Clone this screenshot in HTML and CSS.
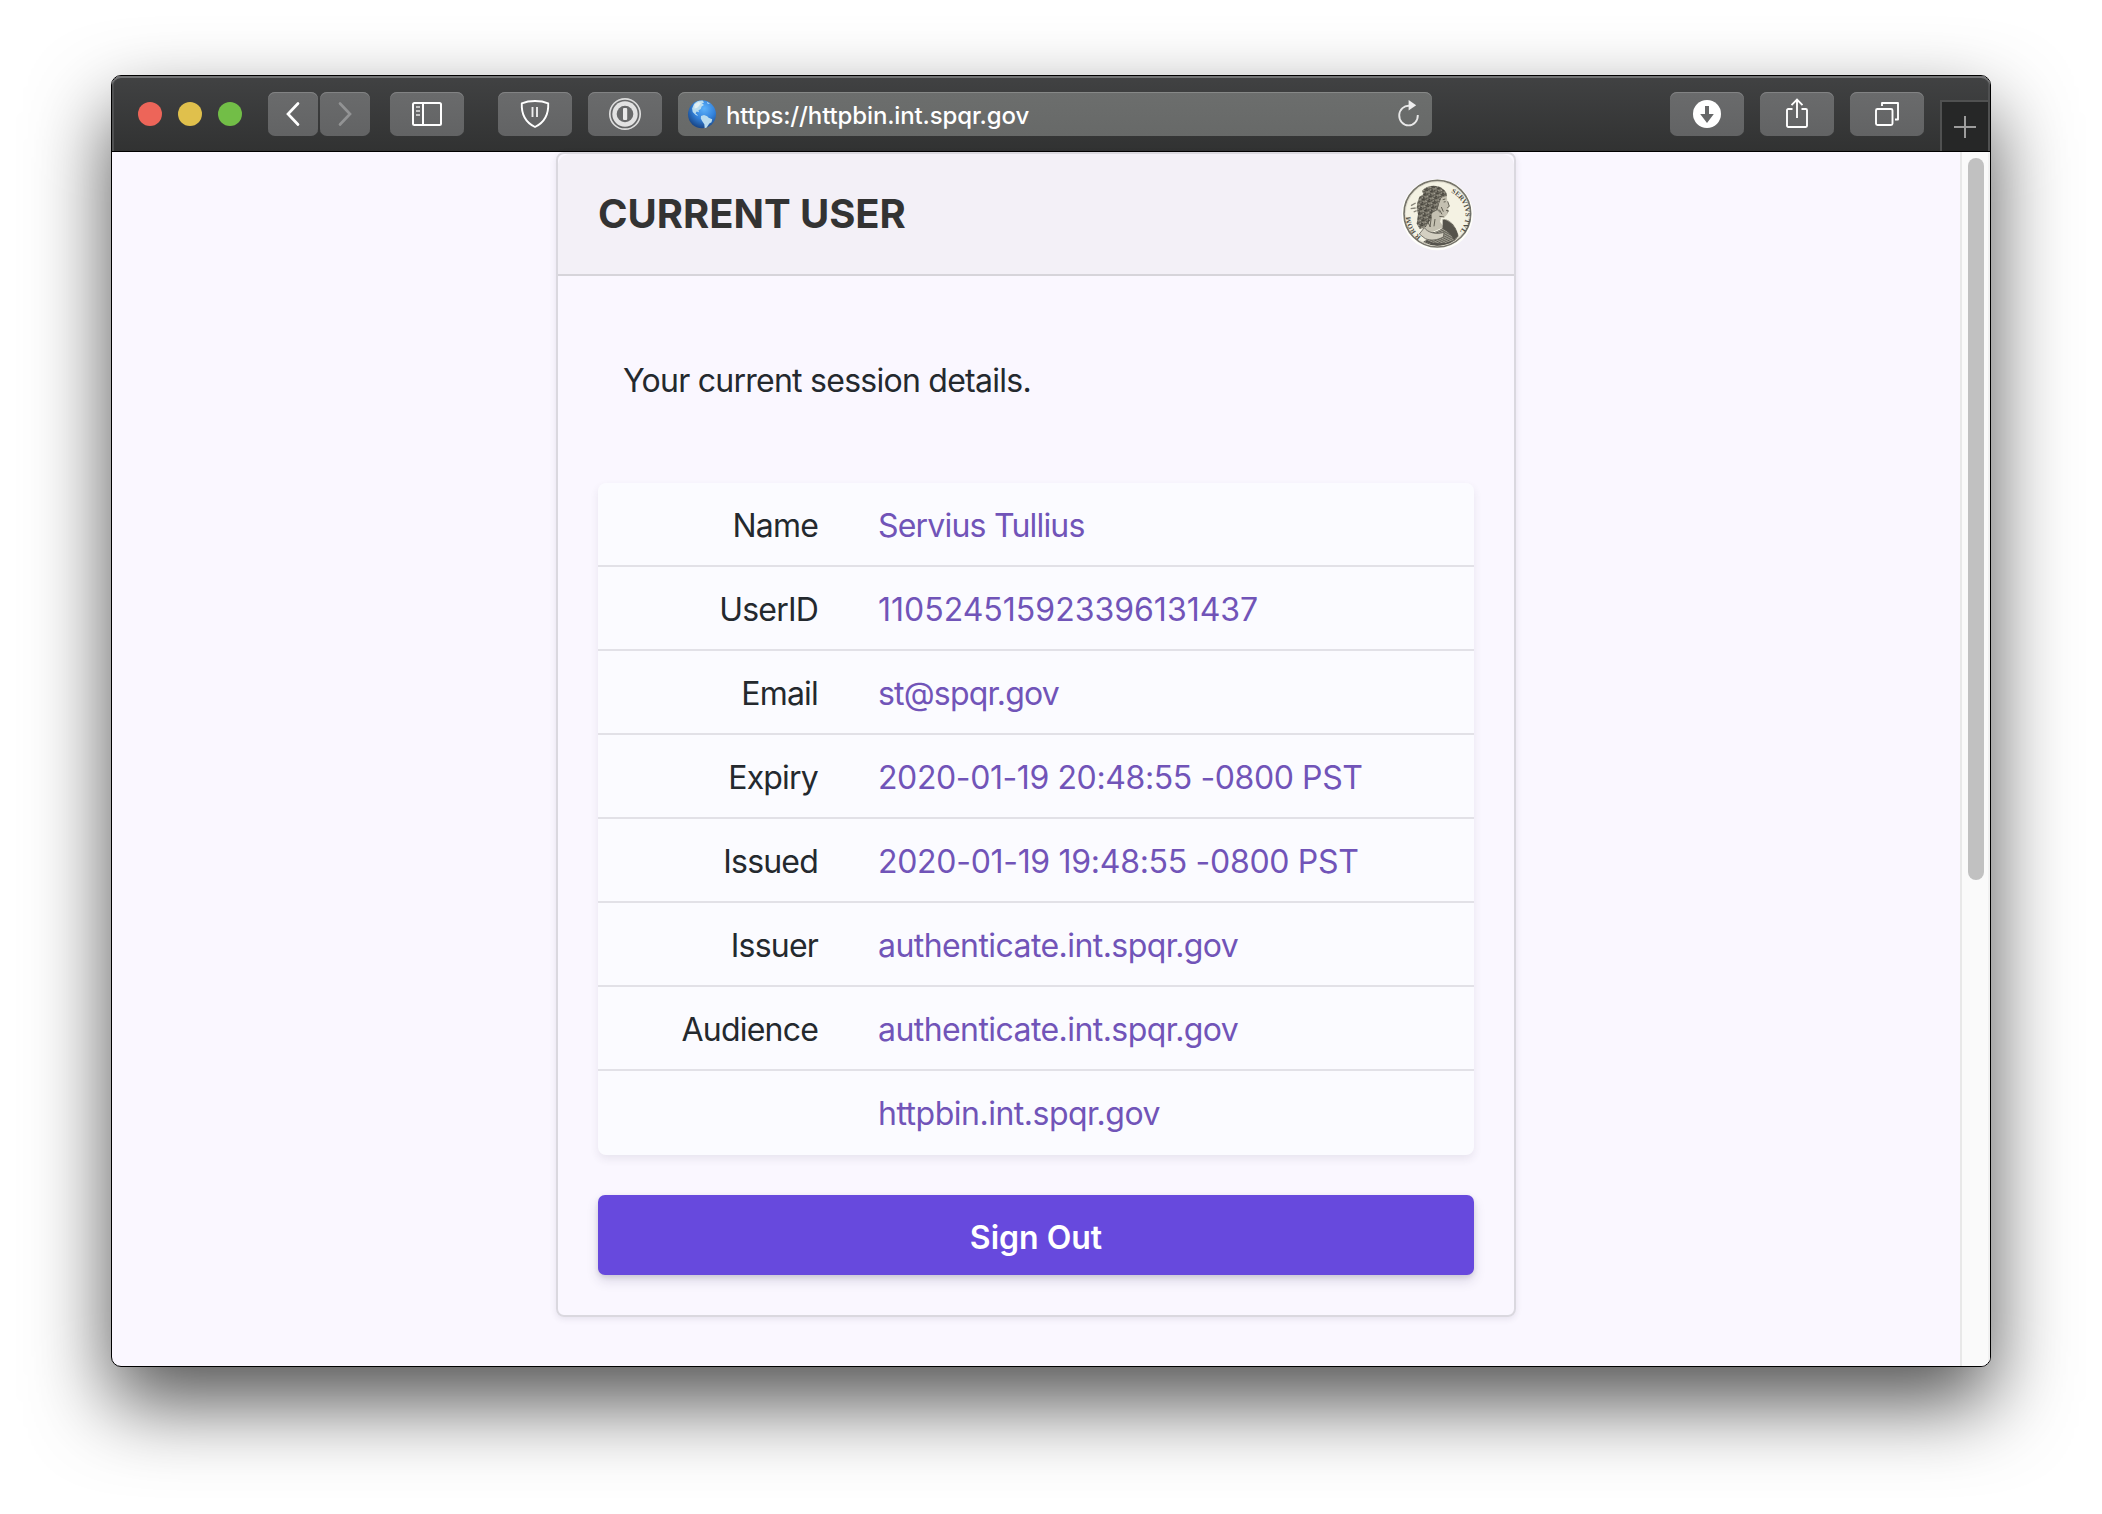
FILE: index.html
```html
<!DOCTYPE html>
<html lang="en">
<head>
<meta charset="utf-8">
<title>Current User</title>
<link rel="stylesheet" href="styles.css">
</head>
<body>
<div class="window">
  <header class="toolbar">
    <div class="lights"><i class="light red"></i><i class="light yellow"></i><i class="light green"></i></div>
    <div class="nav">
      <button class="tool narrow"><svg width="50" height="44" viewBox="0 0 50 44"><path d="M30 11.500L20 22l10 10.500" fill="none" stroke="#fff" stroke-width="2.700" stroke-linecap="round"/></svg></button>
      <button class="tool narrow"><svg width="50" height="44" viewBox="0 0 50 44"><path d="M20 11.500L30 22l-10 10.500" fill="none" stroke="#929394" stroke-width="2.700" stroke-linecap="round"/></svg></button>
    </div>
    <button class="tool sidebar"><svg width="74" height="44" viewBox="0 0 74 44"><rect x="23" y="11" width="28" height="22" rx="1.500" fill="none" stroke="#fff" stroke-width="2"/><path d="M33 11v22" stroke="#fff" stroke-width="2"/><path d="M26 15h4M26 19h4M26 23h4" stroke="#c4c4c4" stroke-width="2"/></svg></button>
    <button class="tool shield"><svg width="74" height="44" viewBox="0 0 74 44"><path d="M37 9c5 0 9.500.8 13.200 2.300C50.700 22 46.500 30.500 37 35 27.500 30.500 23.300 22 23.800 11.300 27.500 9.800 32 9 37 9z" fill="none" stroke="#fff" stroke-width="1.900" stroke-linejoin="round"/><path d="M34.500 15v10M39 15v10" stroke="#ececec" stroke-width="1.900"/></svg></button>
    <button class="tool onepass"><svg width="74" height="44" viewBox="0 0 74 44"><circle cx="37" cy="22" r="15.200" fill="none" stroke="#dcdcdc" stroke-width="1.700"/><circle cx="37" cy="22" r="12.700" fill="#e2e2e2"/><circle cx="37" cy="22" r="8.300" fill="#68696a"/><rect x="35" y="16" width="4.200" height="12" rx="1" fill="#e8e8e8"/></svg></button>
    <div class="address">
      <svg width="30" height="30" viewBox="0 0 30 30">
        <defs><radialGradient id="sea" cx=".58" cy=".3" r=".75"><stop offset="0" stop-color="#5db2fb"/><stop offset=".5" stop-color="#3483dc"/><stop offset="1" stop-color="#153e7c"/></radialGradient></defs>
        <circle cx="15" cy="15.300" r="14" fill="url(#sea)"/>
        <path d="M7 5c2-2.300 5-3.500 8.500-3.400l1.700 2-2.200.7 2 1.700-2.400 1.500-.8 2.500-2.300 1.300.5 2-2.300-.8-1.200 1.700 1.500 1.200 1.200 1.500-2.500-1-3-2.800-.6-3.500zM14 17l3-1 3.200 1.300 1.400 1.400 3.600 1.600-.7 3-2.200 1.300-2.600 4-2 .6-.4-4-2.200-3.200-1.300-2.500z" fill="#b9dcef"/>
        <path d="M7.500 5.500l4-2.500 2.500 1-2 3-2 2-2.500.500zM20 3l3 1.800-2.500-.3z" fill="#e0eff4"/>
      </svg>
      <span class="url">https://httpbin.int.spqr.gov</span>
      <svg class="reload" width="22" height="30" viewBox="0 0 22 30"><path d="M11.500 6.800A9.300 9.800 0 1 0 19.800 16" fill="none" stroke="#e8e8e8" stroke-width="1.900"/><path d="M10.600 1l7.600 5.300-7.600 5.200z" fill="#eee"/></svg>
    </div>
    <div class="actions">
      <button class="tool"><svg width="74" height="44" viewBox="0 0 74 44"><circle cx="37" cy="22" r="14" fill="#fff"/><path d="M35 14h4v8h4.800L37 31l-6.800-9H35z" fill="#666768"/></svg></button>
      <button class="tool"><svg width="74" height="44" viewBox="0 0 74 44"><path d="M32.500 17h-4.300a1.200 1.200 0 0 0-1.200 1.200v15.600A1.200 1.200 0 0 0 28.200 35h17.600a1.200 1.200 0 0 0 1.200-1.200V18.200a1.200 1.200 0 0 0-1.200-1.200h-4.300M37 26V7.500M31.500 13.200L37 7.500l5.500 5.700" fill="none" stroke="#fff" stroke-width="1.900"/></svg></button>
      <button class="tool"><svg width="74" height="44" viewBox="0 0 74 44"><rect x="26" y="17" width="16.500" height="16" rx="1.500" fill="none" stroke="#fff" stroke-width="1.900"/><path d="M32 14v-3h16v16.500h-3" fill="none" stroke="#fff" stroke-width="1.900" stroke-linejoin="round"/></svg></button>
    </div>
    <button class="newtab"><svg width="22" height="22" viewBox="0 0 22 22"><path d="M11 0v22M0 11h22" stroke="#9c9c9c" stroke-width="2"/></svg></button>
  </header>
  <div class="viewport">
    <main class="page">
      <section class="card">
        <div class="card-header">
          <h1>CURRENT USER</h1>
          <svg class="avatar" width="72" height="72" viewBox="0 0 216 216">
            <defs>
              <clipPath id="disc"><circle cx="106" cy="104" r="96"/></clipPath>
              <pattern id="hatch" width="7" height="6" patternUnits="userSpaceOnUse" patternTransform="rotate(28)"><rect width="7" height="6" fill="#a19e92"/><path d="M0 2q3-3 7 0" stroke="#4f4e45" stroke-width="2.600" fill="none"/></pattern>
              <pattern id="curls" width="17" height="15" patternUnits="userSpaceOnUse" patternTransform="rotate(17)"><rect width="17" height="15" fill="#827e71"/><path d="M1 8c1-8 11-7 10-1s-7 5-5 1M11 14c0-5 5-5 5-2M12 3l4 4" stroke="#45433b" stroke-width="3" fill="none"/><path d="M13 1l2 3M2 12l4 2M5 6l3-1" stroke="#c9c6b8" stroke-width="2.200"/></pattern>
              <path id="right-arc" d="M147 40A76 76 0 0 1 171 160"/>
              <path id="left-arc" d="M57 174A80 80 0 0 1 27 94"/>
            </defs>
            <circle cx="106" cy="107" r="107" fill="#fefefa"/>
            <circle cx="106" cy="104" r="100" fill="#f4f2e3" stroke="#77756b" stroke-width="5"/>
            <circle cx="106" cy="104" r="96" fill="none" stroke="#c8c5b6" stroke-width="1.500"/>
            <g clip-path="url(#disc)">
              <path d="M88 28c24-8 42 4 46 20l2 18 6 15-3 6-1 16-7 9-13 3-4 13 12 16-47 20-19-16 4-34z" fill="#c4c0b1"/>
              <path d="M65 150c16 12 35 14 57-4l5-26c22 4 37 26 43 51l-18 25-38 12-43-4-8-15 22-16z" fill="url(#hatch)"/>
              <path d="M67 146c9 14 35 22 59 14l-2 14c-20 10-36 12-54 5l-18-14z" fill="#d4d0c2" stroke="#65635a" stroke-width="2.500"/>
              <path d="M122 121c22 4 42 27 46 49l-12 14c-10-24-27-28-34-37z" fill="#55534b"/>
              <path d="M60 35c14-17 46-19 62-6 9 7 14 14 13 22l-17 5-7 18-6 20-14 7-4 19-16 24-18 6-9-16 4-28-4-18 2-17 6-18 12-7z" fill="url(#curls)"/>
              <path d="M122 62l8-2M125 69l6-1M137 67l5 15-6 4M132 94l7 1-2 5M109 79c-5 8-2 16 4 20M112 112l15 2M75 124l10 20M88 113l-4 31M99 120l-3 22M118 84l6 14M112 92l8 14" fill="none" stroke="#625f54" stroke-width="3"/>
              <path d="M27 80l14-8M26 89l15-2M35 99l9-4" stroke="#88857a" stroke-width="4"/>
              <path d="M72 187q42 18 88-2M85 195q30 8 60-2" stroke="#55534c" stroke-width="5" fill="none"/>
            </g>
            <text class="coin-text"><textPath href="#right-arc">SERVIVS TVL</textPath></text>
            <text class="coin-text"><textPath href="#left-arc">R ROM</textPath></text>
          </svg>
        </div>
        <div class="card-body">
          <p class="intro">Your current session details.</p>
          <dl class="details">
            <div class="row"><dt>Name</dt><dd>Servius Tullius</dd></div>
            <div class="row"><dt>UserID</dt><dd class="digits">110524515923396131437</dd></div>
            <div class="row"><dt>Email</dt><dd>st@spqr.gov</dd></div>
            <div class="row"><dt>Expiry</dt><dd class="date">2020-01-19 20:48:55 -0800 PST</dd></div>
            <div class="row"><dt>Issued</dt><dd class="date issued">2020-01-19 19:48:55 -0800 PST</dd></div>
            <div class="row"><dt>Issuer</dt><dd class="host">authenticate.int.spqr.gov</dd></div>
            <div class="row"><dt>Audience</dt><dd class="host">authenticate.int.spqr.gov</dd></div>
            <div class="row"><dt></dt><dd class="host">httpbin.int.spqr.gov</dd></div>
          </dl>
          <button class="signout">Sign Out</button>
        </div>
      </section>
    </main>
    <div class="scrollbar"><div class="thumb"></div></div>
  </div>
</div>
</body>
</html>
```
FILE: styles.css
```css
* { box-sizing: border-box; }

body {
  margin: 0;
  padding: 75px 111px 0;
  height: 1514px;
  overflow: hidden;
  background: #fff;
  font-family: Inter, "Liberation Sans", sans-serif;
}

button { border: 0; padding: 0; font: inherit; }
svg { display: block; flex: none; }

.window {
  display: flex;
  flex-direction: column;
  width: 1880px;
  height: 1292px;
  border: 1px solid #000;
  border-radius: 10px;
  overflow: hidden;
  background: #faf7ff;
  box-shadow: 0 36px 80px rgba(0, 0, 0, .68);
}

.toolbar {
  display: flex;
  align-items: flex-start;
  flex: none;
  height: 76px;
  padding: 16px 0 0 26px;
  border-bottom: 1px solid #000;
  border-radius: 9px 9px 0 0;
  background: linear-gradient(#414243, #313232);
  box-shadow: inset 0 2px 0 #737475, inset 2px 0 0 #4f5051, inset -2px 0 0 #4f5051;
}

.lights { display: flex; gap: 16px; padding-top: 10px; }
.light { width: 24px; height: 24px; border-radius: 50%; }
.red { background: #ed6559; }
.yellow { background: #e0c04c; }
.green { background: #72be47; }

.nav { display: flex; gap: 2px; margin-left: 26px; }
.tool {
  width: 74px;
  height: 44px;
  flex: none;
  border-radius: 7px;
  background: linear-gradient(#6a6b6c, #626364);
  box-shadow: inset 0 1px 0 #828384;
}
.narrow { width: 50px; }
.sidebar { margin-left: 20px; }
.shield { margin-left: 34px; }
.onepass { margin-left: 16px; }

.address {
  display: flex;
  align-items: center;
  width: 754px;
  height: 44px;
  margin-left: 16px;
  padding: 0 12px 0 9px;
  border-radius: 7px;
  background: linear-gradient(#6c6e6d, #676968);
  box-shadow: inset 0 1px 0 #868887;
}
.url {
  margin-left: 9px;
  padding-top: 2px;
  color: #fff;
  font-size: 24px;
  font-weight: 500;
  letter-spacing: -.13px;
  white-space: nowrap;
}
.reload { margin-left: auto; }

.actions { display: flex; gap: 16px; margin-left: 238px; }
.newtab {
  display: flex;
  align-items: center;
  justify-content: center;
  width: 50px;
  height: 51px;
  margin: 8px 0 0 16px;
  border: 2px solid #505151;
  border-bottom: 0;
  background: #262727;
}

.viewport { display: flex; flex: 1; min-height: 0; }
.page { flex: 1; padding-left: 444px; }
.scrollbar {
  width: 30px;
  padding: 6px 0 0 6px;
  border-left: 2px solid #e8e8e8;
  border-right: 2px solid #f1f1f1;
  background: #fafafa;
}
.thumb { width: 16px; height: 722px; border-radius: 8px; background: #c1c1c1; }

.card {
  width: 960px;
  height: 1165px;
  border: 2px solid #dad8df;
  border-radius: 8px;
  box-shadow: 0 2px 6px rgba(50, 40, 80, .10);
}
.card-header {
  display: flex;
  align-items: center;
  justify-content: space-between;
  height: 122px;
  padding: 2px 40px 0;
  border-bottom: 2px solid #d6d4da;
  border-radius: 12px 12px 0 0;
  background: #f3f0f7;
}
.card-header h1 {
  margin: 0 0 2px;
  color: #333;
  font-size: 40px;
  font-weight: 700;
  letter-spacing: -.05px;
  line-height: 48px;
}
.coin-text { font: 600 21px "Liberation Serif", serif; fill: #4f4d45; }

.card-body { padding: 0 40px; }
.intro {
  margin: 0;
  padding: 81px 25px 78px;
  color: #24292e;
  font-size: 32px;
  letter-spacing: -.74px;
  line-height: 48px;
}

.details {
  margin: 0;
  border-radius: 8px;
  background: #fbfbff;
  box-shadow: 0 4px 8px rgba(50, 40, 80, .09);
}
.row {
  display: flex;
  height: 84px;
  border-bottom: 2px solid #e2e1e7;
  font-size: 32px;
  letter-spacing: -.8px;
  line-height: 85px;
}
.row:last-child { border-bottom: 0; line-height: 86px; }
.row dt { width: 220px; text-align: right; color: #24292e; }
.row dd { margin: 0 0 0 60px; color: #7154b8; white-space: nowrap; }
.row .digits { letter-spacing: 0; }
.row .date { letter-spacing: -.4px; }
.row .issued { letter-spacing: -.3px; }
.row .host { letter-spacing: -.57px; }
.row:last-child .host { letter-spacing: -.5px; }

.signout {
  display: block;
  width: 100%;
  height: 80px;
  margin-top: 40px;
  padding-top: 5px;
  border-radius: 7px;
  background: #6749dd;
  box-shadow: 0 6px 12px rgba(50, 40, 90, .15), 0 2px 5px rgba(0, 0, 0, .10);
  color: #fff;
  font-size: 32px;
  font-weight: 600;
}
```
